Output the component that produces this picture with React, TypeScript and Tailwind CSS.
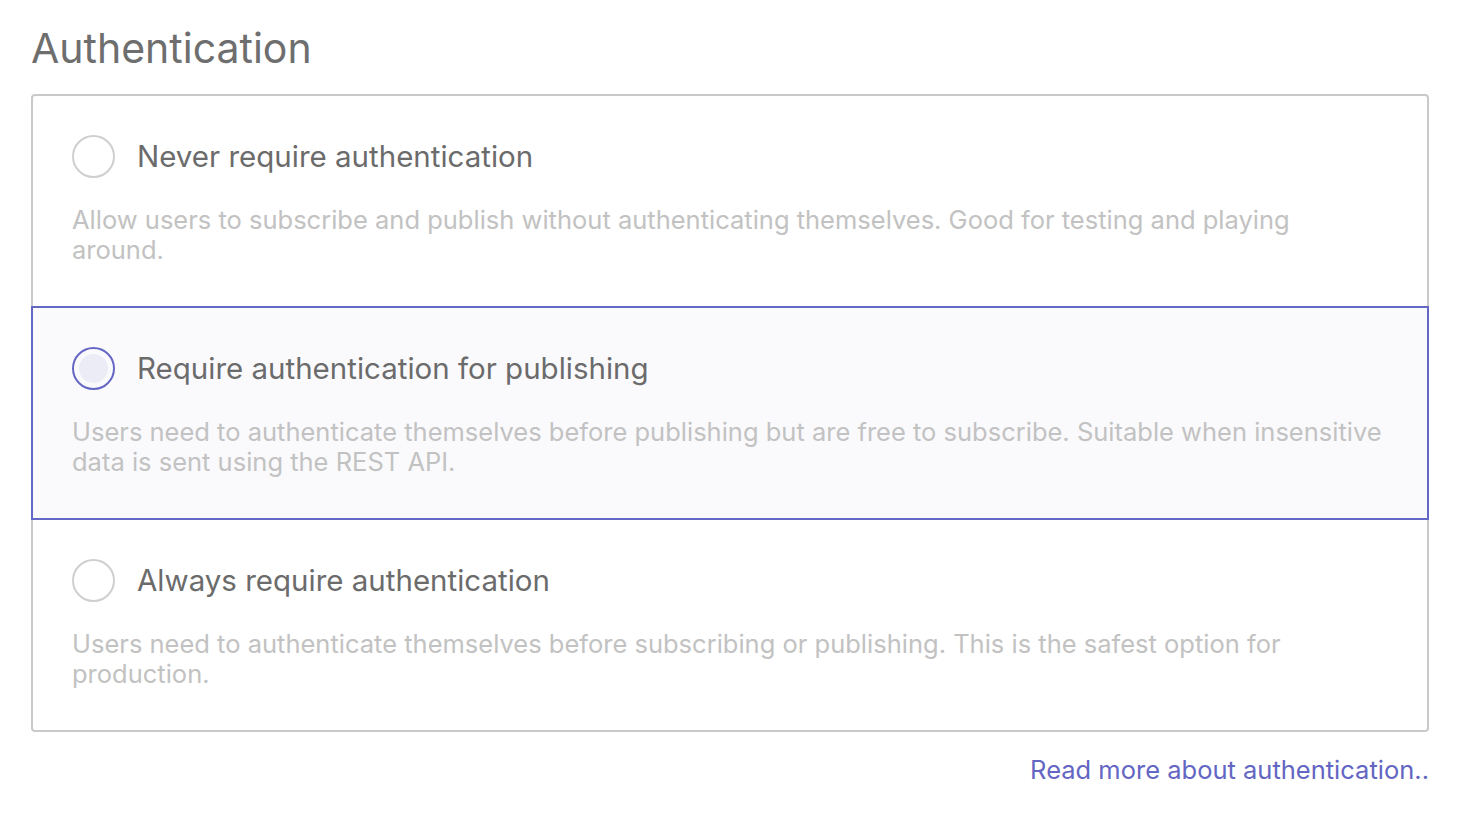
const OPTIONS = [
  {
    title: "Never require authentication",
    desc: [
      "Allow users to subscribe and publish without authenticating themselves. Good for testing and playing",
      "around.",
    ],
    selected: false,
  },
  {
    title: "Require authentication for publishing",
    desc: [
      "Users need to authenticate themselves before publishing but are free to subscribe. Suitable when insensitive",
      "data is sent using the REST API.",
    ],
    selected: true,
  },
  {
    title: "Always require authentication",
    desc: [
      "Users need to authenticate themselves before subscribing or publishing. This is the safest option for",
      "production.",
    ],
    selected: false,
  },
];

export default function App() {
  return (
    <div
      className="min-h-screen bg-white pl-[31px] pr-[37px] pt-[24px]"
      style={{ fontFamily: "Inter, 'Noto Sans', sans-serif" }}
    >
      <h1 className="text-[41px] leading-[48px] text-[#6e6e6e]">Authentication</h1>
      <div className="mt-[22px] rounded-[4px] border-2 border-[#c9c9c9]">
        {OPTIONS.map((o, i) => (
          <div
            key={i}
            className={
              o.selected
                ? "-mx-[2px] border-2 border-[#6567c4] bg-[#fafafd] px-[39px] pb-[41px] pt-[39px]"
                : "px-[39px] pb-[41px] pt-[39px]"
            }
          >
            <div className="flex items-center gap-[22px]">
              <div
                className={
                  o.selected
                    ? "flex h-[43px] w-[43px] shrink-0 items-center justify-center rounded-full border-2 border-[#6567c4]"
                    : "h-[43px] w-[43px] shrink-0 rounded-full border-2 border-[#cfcfcf]"
                }
              >
                {o.selected && <div className="h-[29px] w-[29px] rounded-full bg-[#ececf7]" />}
              </div>
              <span className="text-[29.5px] leading-[43px] text-[#6b6b6b]">{o.title}</span>
            </div>
            <p className="mt-[27px] whitespace-nowrap text-[25.5px] leading-[30px] text-[#c2c2c2]">
              {o.desc.map((line, j) => (
                <span key={j} className="block">
                  {line}
                </span>
              ))}
            </p>
          </div>
        ))}
      </div>
      <div className="mt-[23px] flex justify-end">
        <a href="#" className="text-[25.5px] leading-[30px] text-[#6366c2]">
          Read more about authentication..
        </a>
      </div>
    </div>
  );
}
